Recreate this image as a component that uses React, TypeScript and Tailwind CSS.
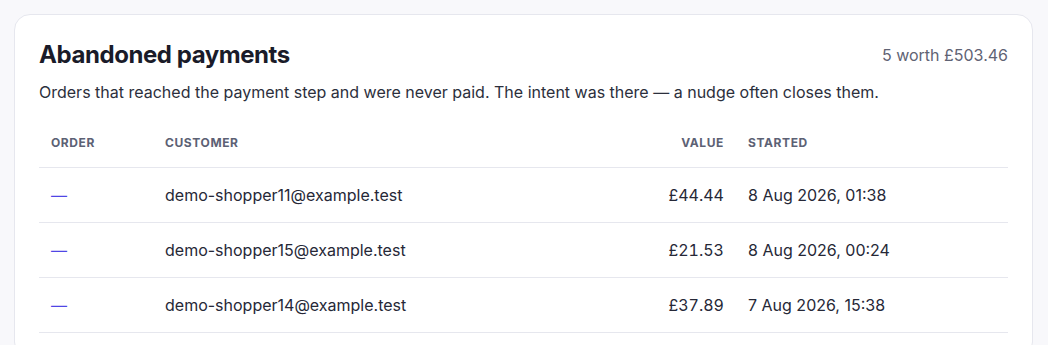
const ROWS = [
  { order: "—", customer: "demo-shopper11@example.test", value: "£44.44", started: "8 Aug 2026, 01:38" },
  { order: "—", customer: "demo-shopper15@example.test", value: "£21.53", started: "8 Aug 2026, 00:24" },
  { order: "—", customer: "demo-shopper14@example.test", value: "£37.89", started: "7 Aug 2026, 15:38" },
];

export default function App() {
  return (
    <div className="min-h-screen bg-[#f8f8fb] p-[14px] pr-[15px] font-['Inter','Noto_Sans',sans-serif] text-[#1c1d2b]">
      <section className="rounded-2xl border border-[#e6e7ee] bg-white p-6">
        {/* Header */}
        <div className="flex items-center justify-between">
          <h2 className="text-2xl font-bold leading-8 tracking-[-0.018em] text-[#1a1b29]">Abandoned payments</h2>
          <span className="text-base leading-6 text-[#5f6374]">5 worth £503.46</span>
        </div>
        <p className="mt-[9px] text-base leading-6 text-[#2c2f3c]">
          Orders that reached the payment step and were never paid. The intent was there — a nudge often closes them.
        </p>

        {/* Table */}
        <table className="mt-[15px] w-full border-collapse text-left text-base">
          <thead>
            <tr className="border-b border-[#e6e7ee]">
              <th className="w-[114px] px-3 py-4 text-xs font-bold uppercase tracking-wider text-[#5c6174]">Order</th>
              <th className="px-3 py-4 text-xs font-bold uppercase tracking-wider text-[#5c6174]">Customer</th>
              <th className="px-3 py-4 text-right text-xs font-bold uppercase tracking-wider text-[#5c6174]">Value</th>
              <th className="w-[272px] px-3 py-4 text-xs font-bold uppercase tracking-wider text-[#5c6174]">Started</th>
            </tr>
          </thead>
          <tbody>
            {ROWS.map((r) => (
              <tr key={r.customer} className="border-b border-[#e6e7ee]">
                <td className="px-3 py-[15px] leading-6 text-[#4f46e5]">{r.order}</td>
                <td className="px-3 py-[15px] leading-6 text-[#262837]">{r.customer}</td>
                <td className="px-3 py-[15px] text-right leading-6 tabular-nums text-[#262837]">{r.value}</td>
                <td className="px-3 py-[15px] leading-6 text-[#262837]">{r.started}</td>
              </tr>
            ))}
          </tbody>
        </table>
      </section>
    </div>
  );
}
